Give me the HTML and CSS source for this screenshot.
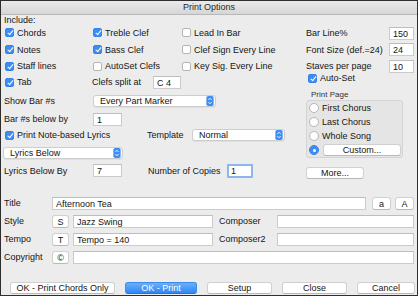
FILE: index.html
```html
<!DOCTYPE html>
<html lang="en">
<head>
    <meta charset="UTF-8">
    <title>Print Options</title>
    <link rel="stylesheet" href="styles.css">
</head>
<body>

<div class="window">
    <div class="titlebar">Print Options</div>

    <div class="main">
        <div class="left">
            <div class="caption">Include:</div>
            <div class="includes">
                <label class="opt"><span class="cb on"></span>Chords</label>
                <label class="opt"><span class="cb on"></span>Treble Clef</label>
                <label class="opt"><span class="cb"></span>Lead In Bar</label>
                <label class="opt"><span class="cb on"></span>Notes</label>
                <label class="opt"><span class="cb on"></span>Bass Clef</label>
                <label class="opt"><span class="cb"></span>Clef Sign Every Line</label>
                <label class="opt"><span class="cb on"></span>Staff lines</label>
                <label class="opt"><span class="cb"></span>AutoSet Clefs</label>
                <label class="opt"><span class="cb"></span>Key Sig. Every Line</label>
                <label class="opt"><span class="cb on"></span>Tab</label>
                <div class="opt split-row">Clefs split at <span class="field split">C 4</span></div>
            </div>

            <div class="row r-bars">
                <span class="lbl">Show Bar #s</span>
                <div class="select bars">Every Part Marker
                    <svg class="stepper" viewBox="0 0 8 11"><rect width="8" height="11" rx="2" fill="#3f8ef5"/><path d="M2.2 4.3 L4 2.5 L5.8 4.3 M2.2 6.7 L4 8.5 L5.8 6.7" stroke="#fff" stroke-width="1" fill="none"/></svg>
                </div>
            </div>
            <div class="row r-below">
                <span class="lbl">Bar #s below by</span>
                <span class="field short">1</span>
            </div>
            <div class="row r-lyrics">
                <label class="opt lyrics-opt"><span class="cb on"></span>Print Note-based Lyrics</label>
                <span class="tpl-lbl">Template</span>
                <div class="select template">Normal
                    <svg class="stepper" viewBox="0 0 8 11"><rect width="8" height="11" rx="2" fill="#3f8ef5"/><path d="M2.2 4.3 L4 2.5 L5.8 4.3 M2.2 6.7 L4 8.5 L5.8 6.7" stroke="#fff" stroke-width="1" fill="none"/></svg>
                </div>
            </div>
            <div class="row r-pos">
                <div class="select lyrics">Lyrics Below
                    <svg class="stepper" viewBox="0 0 8 11"><rect width="8" height="11" rx="2" fill="#3f8ef5"/><path d="M2.2 4.3 L4 2.5 L5.8 4.3 M2.2 6.7 L4 8.5 L5.8 6.7" stroke="#fff" stroke-width="1" fill="none"/></svg>
                </div>
            </div>
            <div class="row r-by">
                <span class="lbl">Lyrics Below By</span>
                <span class="field short">7</span>
                <span class="copies-lbl">Number of Copies</span>
                <span class="field copies">1</span>
            </div>
        </div>

        <div class="right">
            <div class="setting"><span>Bar Line%</span><span class="field num">150</span></div>
            <div class="setting s2"><span>Font Size (def.=24)</span><span class="field num">24</span></div>
            <div class="setting"><span>Staves per page</span><span class="field num">10</span></div>
            <label class="opt autoset"><span class="cb on"></span>Auto-Set</label>
            <div class="group-title">Print Page</div>
            <div class="group">
                <label class="radio-row"><span class="radio"></span>First Chorus</label>
                <label class="radio-row"><span class="radio"></span>Last Chorus</label>
                <label class="radio-row"><span class="radio"></span>Whole Song</label>
                <div class="radio-row"><span class="radio on"></span><span class="btn custom">Custom...</span></div>
            </div>
            <div class="btn more">More...</div>
        </div>
    </div>

    <div class="info">
        <div class="info-row">
            <span class="info-lbl">Title</span>
            <span class="field title">Afternoon Tea</span>
            <span class="btn case first">a</span>
            <span class="btn case">A</span>
        </div>
        <div class="info-row">
            <span class="info-lbl">Style</span>
            <span class="btn key">S</span>
            <span class="field mid">Jazz Swing</span>
            <span class="comp-lbl">Composer</span>
            <span class="field comp"></span>
        </div>
        <div class="info-row">
            <span class="info-lbl">Tempo</span>
            <span class="btn key">T</span>
            <span class="field mid">Tempo = 140</span>
            <span class="comp-lbl">Composer2</span>
            <span class="field comp"></span>
        </div>
        <div class="info-row">
            <span class="info-lbl">Copyright</span>
            <span class="btn key">&copy;</span>
            <span class="field wide"></span>
        </div>
    </div>

    <div class="actions">
        <span class="btn chords-only">OK - Print Chords Only</span>
        <span class="btn primary">OK - Print</span>
        <span class="btn setup">Setup</span>
        <span class="btn close">Close</span>
        <span class="btn cancel">Cancel</span>
    </div>
</div>

</body>
</html>
```

FILE: styles.css
```css
body {
    margin: 0;
    padding: 0;
    background: #ececec;
}
.window {
    width: 418px;
    height: 296px;
    box-sizing: border-box;
    border: 1px solid #2e2e2e;
    background: #ececec;
    font-family: 'Liberation Sans', Arial, sans-serif;
    font-size: 9px;
    color: #151515;
    overflow: hidden;
}
.titlebar {
    height: 13px;
    line-height: 13px;
    text-align: center;
    background: linear-gradient(#ebebeb, #d6d6d6);
    border-bottom: 1px solid #b8b8b8;
    color: #2a2a2a;
}
.main {
    display: flex;
    padding: 0 3px;
    height: 164px;
}
.left {
    width: 300px;
}
.caption {
    height: 9px;
    line-height: 10px;
}
.includes {
    display: grid;
    grid-template-columns: 88px 89px 1fr;
    grid-template-rows: 17px 17px 16px 16px;
}
.opt {
    display: flex;
    align-items: center;
    white-space: nowrap;
}
.cb {
    width: 9px;
    height: 9px;
    box-sizing: border-box;
    border: 1px solid #b4b4b4;
    border-radius: 2px;
    background: #fff;
    margin: 0 3px 0 1px;
    position: relative;
    flex: none;
}
.cb.on {
    background: #3d8ef4;
    border-color: #3483ea;
}
.cb.on::after {
    content: "";
    position: absolute;
    left: 2.5px;
    top: 0;
    width: 2px;
    height: 5px;
    border-right: 1.4px solid #fff;
    border-bottom: 1.4px solid #fff;
    transform: rotate(40deg);
}
.field {
    display: inline-block;
    box-sizing: border-box;
    height: 13px;
    line-height: 12px;
    padding: 0 3px;
    background: #fff;
    border: 1px solid #cbcbcb;
    border-top-color: #bdbdbd;
    white-space: nowrap;
    flex: none;
}
.split {
    width: 28px;
    margin-left: 12px;
}
.row {
    display: flex;
    align-items: center;
}
.r-bars { height: 22px; }
.r-below { height: 14px; }
.r-lyrics { height: 18px; }
.r-pos { height: 18px; }
.r-by { height: 17px; }
.lbl {
    width: 89px;
    flex: none;
}
.select {
    display: flex;
    align-items: center;
    justify-content: space-between;
    box-sizing: border-box;
    height: 12px;
    padding: 0 1px 0 6px;
    background: #fff;
    border: 1px solid #cdcdcd;
    border-radius: 3px;
    box-shadow: 0 1px 0 rgba(0,0,0,0.05);
}
.stepper {
    width: 8px;
    height: 10px;
}
.bars { width: 123px; }
.template { width: 93px; }
.lyrics { width: 120px; margin-left: -1px; }
.short { width: 29px; }
.lyrics-opt { width: 143px; }
.tpl-lbl { width: 45px; }
.copies-lbl {
    margin-left: 26px;
    width: 79px;
}
.copies {
    width: 26px;
    height: 14px;
    border: 2px solid #8db5ee;
    border-radius: 1px;
    padding-left: 2px;
    line-height: 10px;
}
.right {
    width: 110px;
    padding-top: 10px;
    padding-left: 2px;
    box-sizing: border-box;
}
.setting {
    display: flex;
    align-items: center;
    justify-content: space-between;
    height: 16px;
}
.setting.s2 { height: 17px; }
.num { width: 25px; }
.autoset {
    height: 12px;
    margin: -2px 0 0 1px;
}
.group-title {
    height: 16px;
    box-sizing: border-box;
    padding: 6px 0 0 5px;
    font-size: 8px;
    line-height: 10px;
    color: #333;
}
.group {
    width: 97px;
    height: 58px;
    box-sizing: border-box;
    margin-left: 0;
    padding: 0 0 0 2px;
    background: #e5e5e5;
    border: 1px solid #d4d4d4;
    border-radius: 3px;
}
.radio-row {
    display: flex;
    align-items: center;
    height: 14px;
}
.radio {
    width: 10px;
    height: 10px;
    box-sizing: border-box;
    border: 1px solid #b6b6b6;
    border-radius: 50%;
    background: #fff;
    margin-right: 3px;
    flex: none;
    position: relative;
}
.radio.on {
    background: #3d8ef4;
    border-color: #3483ea;
}
.radio.on::after {
    content: "";
    position: absolute;
    left: 2.5px;
    top: 2.5px;
    width: 3px;
    height: 3px;
    border-radius: 50%;
    background: #fff;
}
.btn {
    display: inline-block;
    box-sizing: border-box;
    height: 12px;
    line-height: 11px;
    text-align: center;
    background: #fff;
    border: 1px solid #d0d0d0;
    border-bottom-color: #b9b9b9;
    border-radius: 3px;
    white-space: nowrap;
    flex: none;
}
.custom {
    width: 78px;
    height: 12px;
    margin-left: 1px;
}
.more {
    display: block;
    width: 58px;
    margin: 9px 0 0 0;
}
.info {
    padding: 15px 3px 0 3px;
}
.info-row {
    display: flex;
    align-items: center;
    height: 18px;
}
.info-lbl {
    width: 48px;
    flex: none;
}
.title { width: 314px; }
.case {
    width: 19px;
    height: 13px;
    line-height: 12px;
    margin-left: 4px;
}
.case.first { margin-left: 6px; }
.key {
    width: 17px;
    height: 13px;
    line-height: 12px;
}
.mid {
    width: 140px;
    margin-left: 4px;
}
.comp-lbl {
    width: 64px;
    padding-left: 6px;
    box-sizing: border-box;
}
.comp { width: 137px; }
.wide {
    width: 341px;
    margin-left: 4px;
}
.actions {
    display: flex;
    gap: 10px;
    padding: 16px 0 0 9px;
}
.chords-only { width: 105px; }
.primary {
    width: 72px;
    color: #fff;
    background: linear-gradient(#6aaff9, #2d88f6);
    border-color: #3e8ae8;
    border-bottom-color: #2a72d8;
}
.setup { width: 65px; }
.close { width: 65px; }
.cancel { width: 58px; }
```
